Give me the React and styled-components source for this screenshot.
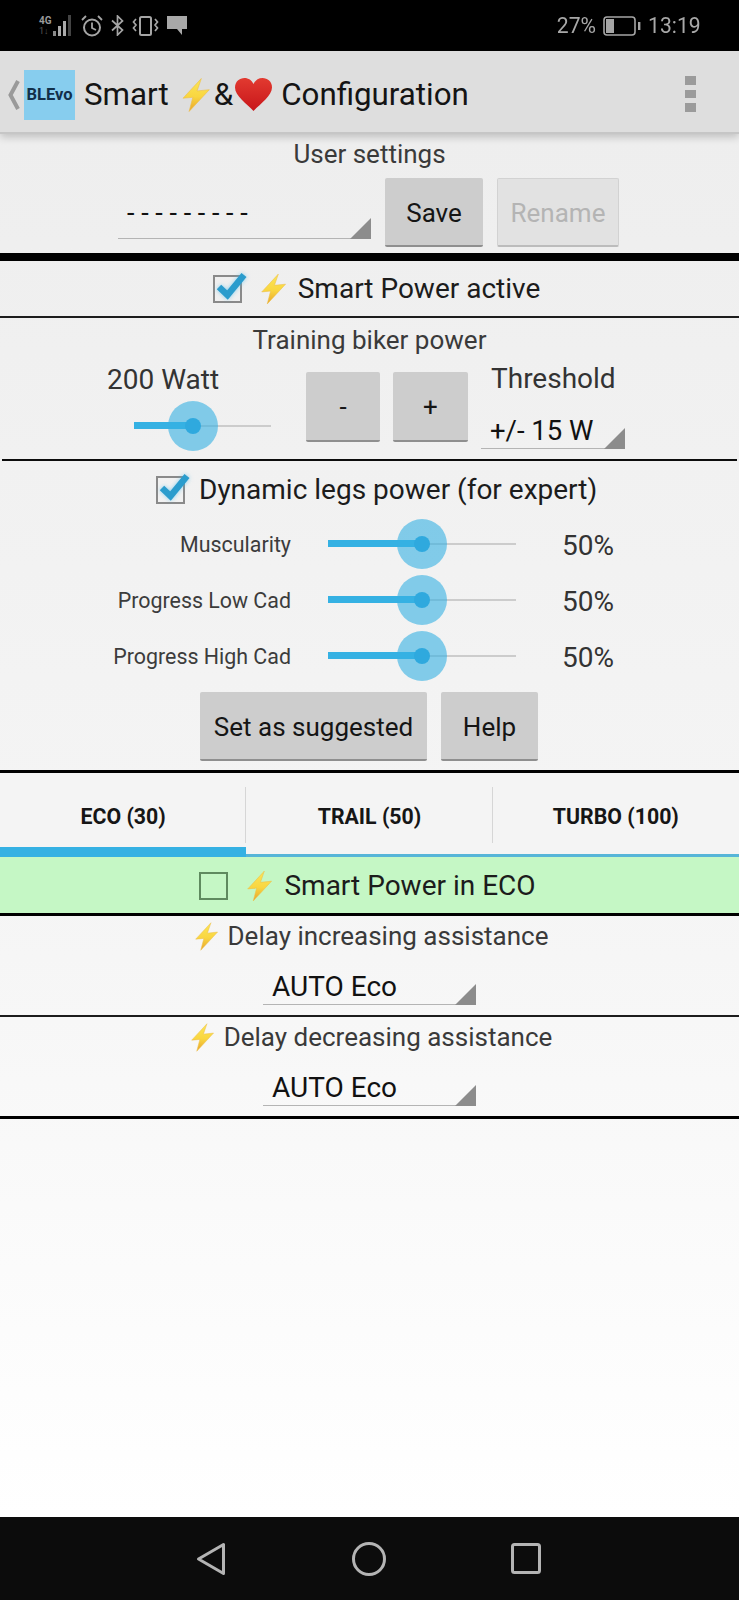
import React from "react"
import styled, { createGlobalStyle } from "styled-components"

const Bolt = ({ w = 25, h = 32 }) => (
  <BoltSvg width={w} height={h} viewBox="0 0 26 32">
    <defs>
      <linearGradient id="boltFill" x1="0" y1="0" x2="0" y2="1">
        <stop offset="0" stopColor="#fbe658" />
        <stop offset="0.55" stopColor="#f9d640" />
        <stop offset="1" stopColor="#e8a42c" />
      </linearGradient>
    </defs>
    <path
      d="M18 0.5 L0.8 19 L10 18.2 L6.5 31.5 L25.5 11 L14 12.2 Z"
      fill="url(#boltFill)"
      stroke="#eec04a"
      strokeWidth="0.6"
      strokeLinejoin="round"
    />
  </BoltSvg>
)

const Heart = () => (
  <BoltSvg width={37} height={33} viewBox="0 0 37 33">
    <defs>
      <linearGradient id="heartFill" x1="0" y1="0" x2="0" y2="1">
        <stop offset="0" stopColor="#e23a30" />
        <stop offset="1" stopColor="#c8161a" />
      </linearGradient>
    </defs>
    <path
      d="M18.5 33 C12 26 0 18 0 9.5 C0 3.5 4.5 0 9.5 0 C13.5 0 16.8 2.2 18.5 6 C20.2 2.2 23.5 0 27.5 0 C32.5 0 37 3.5 37 9.5 C37 18 25 26 18.5 33 Z"
      fill="url(#heartFill)"
    />
  </BoltSvg>
)

const Check = ({ checked }) => (
  <CheckBox>
    {checked && (
      <CheckMark width="36" height="32" viewBox="0 0 36 32">
        <path d="M7 17 L15.5 25 L32 5" fill="none" stroke="#2a9ccd" strokeWidth="6.5" />
      </CheckMark>
    )}
  </CheckBox>
)

const Slider = ({ width, value }) => (
  <Track $width={width}>
    <Active $value={value} />
    <Halo $value={value}>
      <Dot />
    </Halo>
  </Track>
)

const Spinner = ({ width, size, lift, children }) => (
  <SpinnerBox $width={width}>
    <SpinnerText $size={size} $lift={lift}>{children}</SpinnerText>
    <Corner width="21" height="21" viewBox="0 0 21 21">
      <path d="M21 0 V21 H0 Z" fill="#8c8c8c" />
    </Corner>
  </SpinnerBox>
)

const App = () => (
  <Page>
    <Global />
    <StatusBar>
      <StatusLeft>
        <NetBlock>
          <NetLabel>4G</NetLabel>
          <NetArrows>1↓</NetArrows>
        </NetBlock>
        <svg width="20" height="21" viewBox="0 0 20 21">
          <rect x="0" y="16" width="3" height="5" fill="#8a8a8a" />
          <rect x="5" y="11" width="3" height="10" fill="#aaa" />
          <rect x="10" y="6" width="3" height="15" fill="#aaa" />
          <rect x="15" y="0" width="3" height="21" fill="#444" />
        </svg>
        <StatusIcon width="22" height="22" viewBox="0 0 22 22">
          <circle cx="11" cy="12.5" r="8" fill="none" stroke="#a5a5a5" strokeWidth="2" />
          <path d="M11 7.5 V13 L15 15 M1 5 L5 1 M21 5 L17 1" fill="none" stroke="#a5a5a5" strokeWidth="1.8" />
        </StatusIcon>
        <StatusIcon width="13" height="21" viewBox="0 0 13 21">
          <path d="M1 5.5 L11.5 15 L6.5 20 V1 L11.5 6 L1 15.5" fill="none" stroke="#a5a5a5" strokeWidth="1.7" />
        </StatusIcon>
        <StatusIcon width="27" height="20" viewBox="0 0 27 20">
          <rect x="8" y="1" width="11" height="18" rx="1.5" fill="none" stroke="#a5a5a5" strokeWidth="2" />
          <path d="M4 3 L1.5 6 L4 9 L1.5 12 L4 15 M23 3 L25.5 6 L23 9 L25.5 12 L23 15" fill="none" stroke="#a5a5a5" strokeWidth="1.7" />
        </StatusIcon>
        <StatusIcon width="20" height="19" viewBox="0 0 20 19">
          <path d="M0 0 H20 V13 H15 V19 L10 13 H0 Z" fill="#a8a8a8" />
        </StatusIcon>
      </StatusLeft>
      <StatusRight>
        <StatusText>27%</StatusText>
        <svg width="38" height="20" viewBox="0 0 38 20">
          <rect x="1" y="1" width="31" height="18" rx="3" fill="none" stroke="#a5a5a5" strokeWidth="1.6" />
          <rect x="3" y="3" width="8" height="14" fill="#a5a5a5" />
          <rect x="35" y="6" width="2.4" height="8" fill="#a5a5a5" />
        </svg>
        <StatusText>13:19</StatusText>
      </StatusRight>
    </StatusBar>

    <AppBar>
      <BackArrow width="12" height="30" viewBox="0 0 12 30">
        <path d="M10 1 L2.5 15 L10 29" fill="none" stroke="#999" strokeWidth="4" />
      </BackArrow>
      <Logo>BLEvo</Logo>
      <Title>Smart</Title>
      <TitleBolt>
        <Bolt w={28} h={34} />
      </TitleBolt>
      <Title>&amp;</Title>
      <Heart />
      <Title $left={9}>Configuration</Title>
      <Overflow>
        <i />
        <i />
        <i />
      </Overflow>
    </AppBar>

    <Content>
      <UserSection>
        <Caption>User settings</Caption>
        <UserRow>
          <Spinner width={253} size={27} lift={16}>- - - - - - - - -</Spinner>
          <Button $w={98} $h={69}>Save</Button>
          <Button $w={122} $h={69} $disabled>Rename</Button>
        </UserRow>
      </UserSection>
      <ThickRule />

      <ToggleRow>
        <Check checked />
        <Bolt />
        <BigText>Smart Power active</BigText>
      </ToggleRow>
      <ThinRule />

      <TrainingSection>
        <Caption>Training biker power</Caption>
        <TrainingRow>
          <WattCol>
            <Value>200 Watt</Value>
            <Slider width={137} value={43} />
          </WattCol>
          <Button $w={74} $h={70}>-</Button>
          <Button $w={75} $h={70}>+</Button>
          <ThresholdCol>
            <Value>Threshold</Value>
            <Spinner width={144} size={27.5}>+/- 15 W</Spinner>
          </ThresholdCol>
        </TrainingRow>
      </TrainingSection>
      <InsetRule />

      <DynamicSection>
        <DynamicHead>
          <Check checked />
          <BigText>Dynamic legs power (for expert)</BigText>
        </DynamicHead>
        <SliderList>
          {["Muscularity", "Progress Low Cad", "Progress High Cad"].map((name) => (
            <SliderRow key={name}>
              <SliderLabel>{name}</SliderLabel>
              <Slider width={188} value={50} />
              <Percent>50%</Percent>
            </SliderRow>
          ))}
        </SliderList>
        <SuggestRow>
          <Button $w={227} $h={69}>Set as suggested</Button>
          <Button $w={97} $h={69}>Help</Button>
        </SuggestRow>
      </DynamicSection>
      <MidRule />

      <Tabs>
        <Tab $active>ECO (30)</Tab>
        <Tab>TRAIL (50)</Tab>
        <Tab>TURBO (100)</Tab>
      </Tabs>

      <GreenRow>
        <Check />
        <Bolt />
        <BigText>Smart Power in ECO</BigText>
      </GreenRow>
      <MidRule />

      <DelaySection>
        <DelayHead>
          <Bolt w={23} h={29} />
          <Caption>Delay increasing assistance</Caption>
        </DelayHead>
        <Spinner width={213} size={28}>AUTO Eco</Spinner>
      </DelaySection>
      <ThinRule />
      <DelaySection>
        <DelayHead>
          <Bolt w={23} h={29} />
          <Caption>Delay decreasing assistance</Caption>
        </DelayHead>
        <Spinner width={213} size={28}>AUTO Eco</Spinner>
      </DelaySection>
      <MidRule />
    </Content>

    <NavBar>
      <svg width="30" height="34" viewBox="0 0 30 34">
        <path d="M27.5 2.5 V31.5 L2.5 17 Z" fill="none" stroke="#b4b4b4" strokeWidth="3" strokeLinejoin="round" />
      </svg>
      <svg width="34" height="34" viewBox="0 0 34 34">
        <circle cx="17" cy="17" r="15.5" fill="none" stroke="#b4b4b4" strokeWidth="3" />
      </svg>
      <svg width="30" height="31" viewBox="0 0 30 31">
        <rect x="1.5" y="1.5" width="27" height="28" rx="2" fill="none" stroke="#b4b4b4" strokeWidth="3" />
      </svg>
    </NavBar>
  </Page>
)

export default App

const Global = createGlobalStyle`
  html, body {
    margin: 0;
    padding: 0;
    background: #fff;
  }
  * {
    box-sizing: border-box;
  }
`

const Page = styled.div`
  width: 739px;
  height: 1600px;
  display: flex;
  flex-direction: column;
  overflow: hidden;
  font-family: Roboto, "Liberation Sans", sans-serif;
  color: #111;
`
const BoltSvg = styled.svg`
  display: block;
  flex-shrink: 0;
`
const StatusBar = styled.div`
  height: 51px;
  flex-shrink: 0;
  background: #000;
  display: flex;
  align-items: center;
  justify-content: space-between;
  padding: 0 37px 0 39px;
`
const StatusLeft = styled.div`
  display: flex;
  align-items: center;
`
const NetBlock = styled.div`
  width: 14px;
  display: flex;
  flex-direction: column;
  color: #9a9a9a;
  line-height: 10px;
`
const NetLabel = styled.span`
  font-size: 10px;
  font-weight: 700;
`
const NetArrows = styled.span`
  font-size: 9px;
  color: #555;
`
const StatusIcon = styled.svg`
  margin-left: 8px;
  display: block;
`
const StatusRight = styled.div`
  display: flex;
  align-items: center;
  gap: 6px;
`
const StatusText = styled.span`
  font-size: 22px;
  font-weight: 400;
  color: #a8a8a8;
  transform: scaleX(0.96);
`
const AppBar = styled.div`
  height: 83px;
  flex-shrink: 0;
  background: #dedede;
  display: flex;
  align-items: center;
  padding: 6px 0 0 8px;
  position: relative;
  z-index: 2;
  border-bottom: 2px solid #c6c6c6;
  box-shadow: 0 3px 8px rgba(0, 0, 0, 0.2);
`
const BackArrow = styled.svg`
  margin-right: 4px;
`
const Logo = styled.div`
  width: 51px;
  height: 50px;
  background: #87cdee;
  color: #12304a;
  font-size: 16.5px;
  font-weight: 700;
  display: flex;
  align-items: center;
  justify-content: center;
  margin-right: 9px;
`
const Title = styled.div`
  font-size: 31.3px;
  color: #141414;
  margin-left: ${(p) => p.$left || 0}px;
  margin-right: 2px;
`
const TitleBolt = styled.div`
  margin: 0 4px 0 11px;
`
const Overflow = styled.div`
  position: absolute;
  left: 685px;
  top: 25px;
  display: flex;
  flex-direction: column;
  gap: 5px;
  i {
    display: block;
    width: 11px;
    height: 8.5px;
    background: #9b9b9b;
  }
`
const Content = styled.div`
  flex: 1;
  background: linear-gradient(#eeeeee 0%, #f5f5f5 55%, #ffffff 100%);
`
const Caption = styled.div`
  font-size: 26px;
  line-height: 28px;
  color: #3a3a3a;
  text-align: center;
`
const UserSection = styled.div`
  height: 119px;
  padding-top: 6px;
`
const UserRow = styled.div`
  display: flex;
  align-items: flex-end;
  padding-left: 118px;
  margin-top: 10px;
  height: 69px;
  gap: 14px;
`
const SpinnerBox = styled.div`
  width: ${(p) => p.$width}px;
  height: 36px;
  flex-shrink: 0;
  position: relative;
  border-bottom: 1.5px solid #b4b4b4;
  display: flex;
  align-items: center;
  padding-left: 9px;
  ${UserRow} & {
    margin-bottom: 8px;
  }
`
const SpinnerText = styled.span`
  font-size: ${(p) => p.$size}px;
  color: #111;
  margin-bottom: ${(p) => p.$lift || 0}px;
`
const Corner = styled.svg`
  position: absolute;
  right: 0;
  bottom: -1px;
`
const Button = styled.div`
  width: ${(p) => p.$w}px;
  height: ${(p) => p.$h}px;
  flex-shrink: 0;
  display: flex;
  align-items: center;
  justify-content: center;
  padding-top: 2px;
  font-size: 26px;
  border-radius: 2px;
  background: ${(p) => (p.$disabled ? "#e2e2e2" : "#cdcdcd")};
  color: ${(p) => (p.$disabled ? "#b4b4b4" : "#151515")};
  border: ${(p) => (p.$disabled ? "1px solid #d2d2d2" : "none")};
  border-bottom: 2px solid ${(p) => (p.$disabled ? "#bcbcbc" : "#8f8f8f")};
`
const ThickRule = styled.div`
  height: 8px;
  background: #000;
`
const ThinRule = styled.div`
  height: 2px;
  background: #1c1c1c;
`
const MidRule = styled.div`
  height: 3px;
  background: #000;
`
const InsetRule = styled(ThinRule)`
  margin: 0 2px;
  background: #0c0c0c;
`
const CheckBox = styled.div`
  width: 29px;
  height: 28px;
  flex-shrink: 0;
  border: 2px solid #8a8a8a;
  position: relative;
`
const CheckMark = styled.svg`
  position: absolute;
  left: -3px;
  top: -7px;
  filter: drop-shadow(0 0 2px rgba(70, 185, 235, 0.6));
`
const BigText = styled.div`
  font-size: 28px;
  line-height: 32px;
  color: #1c1c1c;
`
const ToggleRow = styled.div`
  height: 55px;
  display: flex;
  align-items: center;
  justify-content: center;
  gap: 12px;
  padding: 1px 0 0 14px;
  ${CheckBox} {
    margin-right: 7px;
  }
`
const TrainingSection = styled.div`
  height: 141px;
  padding-top: 8px;
`
const TrainingRow = styled.div`
  display: flex;
  align-items: flex-start;
  padding-left: 107px;
  height: 98px;
  margin-top: 18px;
  gap: 13px;
`
const WattCol = styled.div`
  width: 186px;
  display: flex;
  flex-direction: column;
  align-items: flex-start;
  margin-top: -9px;
`
const Value = styled.div`
  font-size: 28px;
  line-height: 34px;
  color: #333;
`
const Track = styled.div`
  width: ${(p) => p.$width}px;
  height: 1.5px;
  background: #cccccc;
  position: relative;
  flex-shrink: 0;
  ${WattCol} & {
    margin: 28px 0 0 27px;
  }
`
const Active = styled.div`
  position: absolute;
  left: 0;
  top: -3px;
  height: 7px;
  width: ${(p) => p.$value}%;
  background: #35b1e3;
`
const Halo = styled.div`
  position: absolute;
  left: ${(p) => p.$value}%;
  top: 1px;
  width: 50px;
  height: 50px;
  margin: -25px 0 0 -25px;
  border-radius: 50%;
  background: rgba(53, 177, 227, 0.6);
  display: flex;
  align-items: center;
  justify-content: center;
`
const Dot = styled.div`
  width: 16px;
  height: 16px;
  border-radius: 50%;
  background: #2fa9de;
`
const ThresholdCol = styled.div`
  width: 144px;
  margin-top: -8px;
  display: flex;
  flex-direction: column;
  align-items: flex-start;
  ${Value} {
    margin-left: 10px;
    line-height: 30px;
  }
  ${SpinnerBox} {
    margin-top: 19px;
  }
`
const DynamicSection = styled.div`
  height: 309px;
`
const DynamicHead = styled.div`
  display: flex;
  align-items: center;
  justify-content: flex-start;
  padding: 13px 0 0 156px;
  gap: 14px;
`
const SliderList = styled.div`
  margin-top: 15px;
  display: flex;
  flex-direction: column;
  gap: 10px;
`
const SliderRow = styled.div`
  display: flex;
  align-items: center;
  height: 46px;
`
const SliderLabel = styled.div`
  width: 291px;
  margin-right: 37px;
  text-align: right;
  font-size: 21.4px;
  color: #3c3c3c;
`
const Percent = styled.div`
  margin: 2px 0 0 46px;
  font-size: 28px;
  color: #333;
`
const SuggestRow = styled.div`
  display: flex;
  gap: 14px;
  padding-left: 200px;
  margin-top: 13px;
`
const Tabs = styled.div`
  height: 84px;
  display: flex;
  background: #f4f4f4;
`
const Tab = styled.div`
  flex: 1;
  display: flex;
  align-items: flex-start;
  justify-content: center;
  padding-top: 31px;
  font-size: 21.3px;
  font-weight: 700;
  color: #161616;
  position: relative;
  border-bottom: ${(p) => (p.$active ? "10px solid #35b1e3" : "3px solid #56b5d8")};
  &:not(:last-child)::after {
    content: "";
    position: absolute;
    right: 0;
    top: 14px;
    height: 56px;
    width: 1px;
    background: #d6d6d6;
  }
`
const GreenRow = styled(ToggleRow)`
  height: 56px;
  background: #c5f7c5;
  padding: 2px 4px 0 0;
  ${CheckBox} {
    border-color: #5f8a5f;
  }
`
const DelaySection = styled.div`
  height: 99px;
  display: flex;
  flex-direction: column;
  align-items: center;
  padding-top: 5px;
  ${SpinnerBox} {
    margin-top: 18px;
  }
`
const DelayHead = styled.div`
  display: flex;
  align-items: center;
  gap: 10px;
  height: 30px;
  padding-left: 4px;
`
const NavBar = styled.div`
  height: 83px;
  flex-shrink: 0;
  background: #0c0c0c;
  display: flex;
  align-items: center;
  justify-content: space-between;
  padding: 0 198px 0 196px;
`
